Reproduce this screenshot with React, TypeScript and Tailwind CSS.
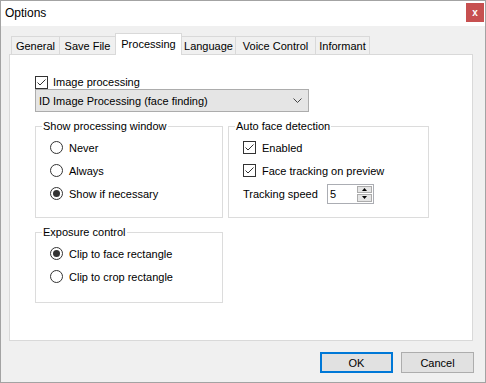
function CheckBox() {
  return (
    <span className="w-[13px] h-[13px] border border-[#333333] bg-white flex items-center justify-center shrink-0">
      <svg width="11" height="11" viewBox="0 0 11 11">
        <path d="M1.5 5.5 L4 8 L9.5 2.5" fill="none" stroke="#333333" strokeWidth="1" />
      </svg>
    </span>
  );
}

function Radio({ checked }: { checked?: boolean }) {
  return (
    <span className="w-[13px] h-[13px] rounded-full border border-[#333333] bg-white flex items-center justify-center shrink-0">
      {checked && <span className="w-[7px] h-[7px] rounded-full bg-[#333333]" />}
    </span>
  );
}

function Group({ title, width, children, pb }: { title: string; width: string; children: React.ReactNode; pb: string }) {
  return (
    <fieldset className={`border border-[#dcdcdc] px-0 min-w-0 ${width} ${pb}`}>
      <legend className="ml-[6px] px-[1px] leading-[14px]">{title}</legend>
      <div className="pt-[3px] flex flex-col">{children}</div>
    </fieldset>
  );
}

const tabs = ['General', 'Save File', 'Processing', 'Language', 'Voice Control', 'Informant'];
const tabWidths = ['w-[49px]', 'w-[57px]', 'w-[67px]', 'w-[55px]', 'w-[81px]', 'w-[55px]'];

export default function App() {
  return (
    <div className="w-[486px] h-[383px] flex flex-col border border-[#a3a3a3] bg-[#f0f0f0] text-[11px] leading-[14px] text-black font-['Liberation_Sans',Arial,sans-serif] overflow-hidden">
      <div className="h-[25px] shrink-0 bg-white flex items-start justify-between pl-[4px] pr-[1px]">
        <span className="text-[12px] leading-[25px]">Options</span>
        <div className="mt-[2px] w-[18px] h-[19px] bg-[#c75050] text-white text-[10px] font-bold flex items-center justify-center">x</div>
      </div>

      <div className="mt-[7px] pl-[10px] h-[21px] flex items-end">
        {tabs.map((t, i) =>
          t === 'Processing' ? (
            <div key={t} className={`${tabWidths[i]} -ml-px -mb-px z-10 h-[22px] bg-white border border-b-0 border-[#d9d9d9] flex items-start justify-center pt-[3px]`}>
              {t}
            </div>
          ) : (
            <div key={t} className={`${tabWidths[i]} -ml-px first:ml-0 h-[18px] bg-[#f0f0f0] border border-b-0 border-[#d9d9d9] flex items-center justify-center`}>
              {t}
            </div>
          )
        )}
      </div>

      <div className="ml-[8px] w-[464px] h-[287px] shrink-0 border border-[#d9d9d9] bg-white flex flex-col pl-[25px] pt-[20px]">
        <div className="h-[14px] flex items-center gap-[5px]">
          <CheckBox />
          <span>Image processing</span>
        </div>
        <div className="w-[274px] h-[23px] border border-[#acacac] bg-[#e5e5e5] flex items-center justify-between pl-[3px] pr-[6px]">
          <span>ID Image Processing (face finding)</span>
          <svg width="9" height="6" viewBox="0 0 9 6">
            <path d="M0.5 0.5 L4.5 4.5 L8.5 0.5" fill="none" stroke="#444444" strokeWidth="1" />
          </svg>
        </div>

        <div className="flex items-start gap-[5px] mt-[7px]">
          <div className="flex flex-col gap-[7px]">
            <Group title="Show processing window" width="w-[188px]" pb="pb-[12px]">
              {[
                ['Never', false],
                ['Always', false],
                ['Show if necessary', true],
              ].map(([label, on]) => (
                <div key={label as string} className="h-[23px] flex items-center gap-[6px] pl-[14px]">
                  <Radio checked={on as boolean} />
                  <span>{label}</span>
                </div>
              ))}
            </Group>
            <Group title="Exposure control" width="w-[188px]" pb="pb-[14px]">
              {[
                ['Clip to face rectangle', true],
                ['Clip to crop rectangle', false],
              ].map(([label, on]) => (
                <div key={label as string} className="h-[23px] flex items-center gap-[6px] pl-[14px]">
                  <Radio checked={on as boolean} />
                  <span>{label}</span>
                </div>
              ))}
            </Group>
          </div>

          <Group title="Auto face detection" width="w-[201px]" pb="pb-[12px]">
            <div className="h-[23px] flex items-center gap-[6px] pl-[14px]">
              <CheckBox />
              <span>Enabled</span>
            </div>
            <div className="h-[23px] flex items-center gap-[6px] pl-[14px]">
              <CheckBox />
              <span>Face tracking on preview</span>
            </div>
            <div className="h-[23px] flex items-center pl-[14px]">
              <span className="w-[84px]">Tracking speed</span>
              <div className="w-[47px] h-[20px] border border-[#abadb3] bg-white flex items-stretch">
                <span className="flex-1 pl-[2px] flex items-center">5</span>
                <div className="w-[15px] my-[1px] mr-[1px] flex flex-col gap-px">
                  <div className="flex-1 bg-[#e5e5e5] border border-[#acacac] flex items-center justify-center">
                    <svg width="5" height="3" viewBox="0 0 5 3"><path d="M0 3 L2.5 0 L5 3 Z" fill="#000" /></svg>
                  </div>
                  <div className="flex-1 bg-[#e5e5e5] border border-[#acacac] flex items-center justify-center">
                    <svg width="5" height="3" viewBox="0 0 5 3"><path d="M0 0 L2.5 3 L5 0 Z" fill="#000" /></svg>
                  </div>
                </div>
              </div>
            </div>
          </Group>
        </div>
      </div>

      <div className="mt-[11px] pr-[11px] flex justify-end gap-[8px]">
        <button className="w-[73px] h-[21px] border-2 border-[#0078d7] bg-[#e1e1e1]">OK</button>
        <button className="w-[73px] h-[21px] border border-[#adadad] bg-[#e1e1e1]">Cancel</button>
      </div>
    </div>
  );
}
